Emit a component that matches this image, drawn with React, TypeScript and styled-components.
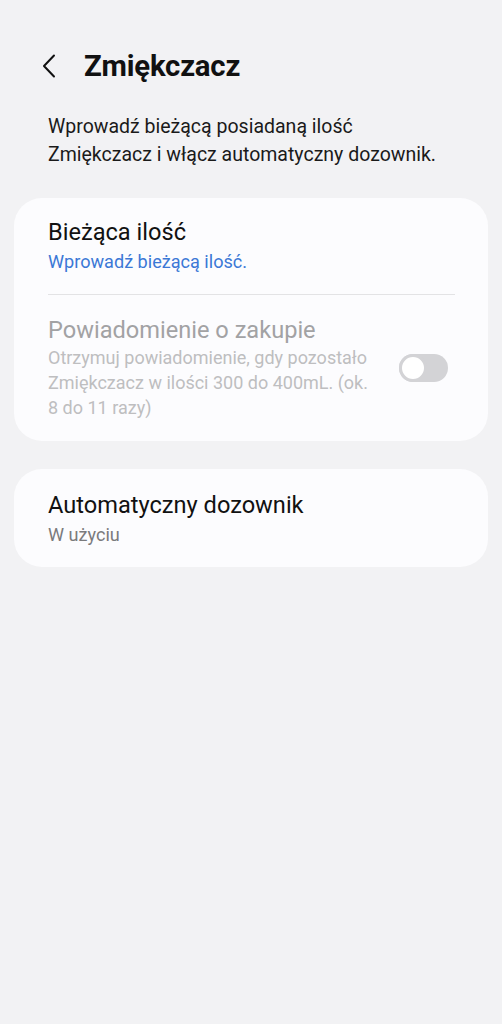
import React from "react";
import styled, { createGlobalStyle } from "styled-components";

const Global = createGlobalStyle`
  html, body { margin: 0; padding: 0; background: #f2f2f4; }
  body { font-family: Roboto, "Noto Sans", "Liberation Sans", sans-serif; -webkit-font-smoothing: antialiased; }
  * { box-sizing: border-box; }
`;

const Page = styled.div`
  min-height: 1024px;
  background: #f2f2f4;
  padding: 0 14px 40px;
  display: flex;
  flex-direction: column;
`;

const Header = styled.div`
  display: flex;
  align-items: center;
  height: 56px;
  margin-top: 38px;
  padding-left: 26px;
  gap: 26px;
`;

const BackButton = styled.div`
  width: 18px;
  height: 28px;
  display: flex;
  align-items: center;
  justify-content: center;
`;

const Title = styled.h1`
  margin: 0;
  font-size: 29.3px;
  font-weight: 700;
  color: #111;
  letter-spacing: -0.2px;
`;

const Description = styled.p`
  margin: 19px 0 0;
  padding: 0 34px;
  font-size: 19.5px;
  line-height: 28px;
  color: #1a1a1a;
`;

const Card = styled.div<{ $top: number; $pt: number; $pb: number }>`
  margin-top: ${(p) => p.$top}px;
  background: #fcfcfe;
  border-radius: 28px;
  padding: ${(p) => p.$pt}px 33px ${(p) => p.$pb}px 34px;
  display: flex;
  flex-direction: column;
`;

const ItemTitle = styled.div<{ $disabled?: boolean }>`
  font-size: 23.6px;
  line-height: 30px;
  color: ${(p) => (p.$disabled ? "#a2a2a4" : "#111")};
`;

const ItemSub = styled.div<{ $color: string; $gap: number }>`
  margin-top: ${(p) => p.$gap}px;
  font-size: 18.1px;
  line-height: 24px;
  color: ${(p) => p.$color};
`;

const Divider = styled.div`
  height: 1px;
  background: #e3e3e5;
  margin: 20px 0;
`;

const Row = styled.div`
  display: flex;
  align-items: center;
`;

const TextCol = styled.div`
  flex: 1;
  min-width: 0;
  padding-right: 12px;
`;

const MultiSub = styled.div`
  font-size: 18px;
  line-height: 25px;
  color: #bebec0;
  max-width: 328px;
`;

const Track = styled.div`
  width: 49px;
  height: 28px;
  border-radius: 14px;
  background: #d3d3d6;
  margin-right: 7px;
  flex-shrink: 0;
  position: relative;
`;

const Knob = styled.div`
  position: absolute;
  left: 0;
  top: 0;
  width: 28px;
  height: 28px;
  border-radius: 50%;
  background: #fff;
  border: 3px solid #d3d3d6;
`;

export default function App() {
  return (
    <>
      <Global />
      <Page>
        <Header>
          <BackButton>
            <svg width="14" height="24" viewBox="0 0 14 24" fill="none">
              <path d="M12 1.5 L2 12 L12 22.5" stroke="#111" strokeWidth="2" strokeLinecap="round" strokeLinejoin="round" />
            </svg>
          </BackButton>
          <Title>Zmiękczacz</Title>
        </Header>
        <Description>
          Wprowadź bieżącą posiadaną ilość
          <br />
          Zmiękczacz i włącz automatyczny dozownik.
        </Description>
        <Card $top={29} $pt={19} $pb={21}>
          <ItemTitle>Bieżąca ilość</ItemTitle>
          <ItemSub $color="#3b78d6" $gap={3}>Wprowadź bieżącą ilość.</ItemSub>
          <Divider />
          <Row>
            <TextCol>
              <ItemTitle $disabled>Powiadomienie o zakupie</ItemTitle>
              <MultiSub>
                Otrzymuj powiadomienie, gdy pozostało Zmiękczacz w ilości 300 do 400mL. (ok. 8 do 11 razy)
              </MultiSub>
            </TextCol>
            <Track>
              <Knob />
            </Track>
          </Row>
        </Card>
        <Card $top={28} $pt={21} $pb={20}>
          <ItemTitle>Automatyczny dozownik</ItemTitle>
          <ItemSub $color="#7a7a7c" $gap={3}>W użyciu</ItemSub>
        </Card>
      </Page>
    </>
  );
}
